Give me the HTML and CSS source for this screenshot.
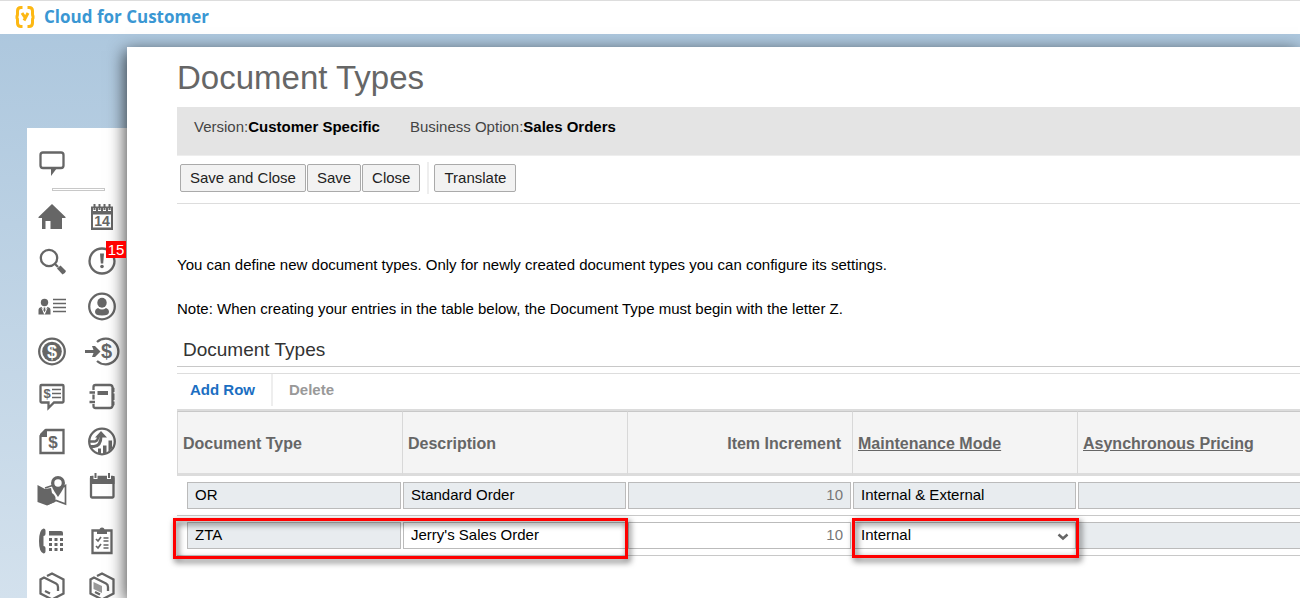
FILE: index.html
```html
<!DOCTYPE html>
<html lang="en">
<head>
    <meta charset="UTF-8">
    <meta name="viewport" content="width=device-width, initial-scale=1.0">
    <title>Document Types - Cloud for Customer</title>
    <link rel="stylesheet" href="styles.css">
</head>
<body>
    <header class="topbar">
        <svg class="logo" viewBox="0 0 22 24" aria-hidden="true">
            <path d="M8.500 2.500H7Q3.500 2.500 3.500 6V9Q3.500 12 1.500 12Q3.500 12 3.500 15V18Q3.500 21.500 7 21.500H8.500M13.500 2.500H15Q18.500 2.500 18.500 6V9Q18.500 12 20.500 12Q18.500 12 18.500 15V18Q18.500 21.500 15 21.500H13.500"/>
            <path d="M8 8L11 12.500M14 8L10 15.500"/>
        </svg>
        <span class="brand">Cloud for Customer</span>
    </header>

    <div class="workspace">
        <aside class="sidebar">
            <a href="#" class="icon" aria-label="Feed">
                <svg viewBox="-18 -18 36 36"><path class="line" d="M-9-10.500H9Q11.500-10.500 11.500-8V2.500Q11.500 5 9 5H-9Q-11.500 5-11.500 2.500V-8Q-11.500-10.500-9-10.500Z"/><path d="M-1 5V13L5 5Z"/></svg>
            </a>
            <hr>
            <nav class="icon-grid">
                <a href="#" class="icon" aria-label="Home">
                    <svg viewBox="-18 -18 36 36"><path d="M0-13L13.500 0V1H10V12H-1.500V4H-6.500V12H-10V1H-13.500V0Z"/></svg>
                </a>
                <a href="#" class="icon" aria-label="Calendar">
                    <svg viewBox="-18 -18 36 36"><path d="M-11-10.500H11V13H-11Z"/><path class="hole" d="M-9-2.500H9V10.500H-9Z"/><path class="hole" d="M-9-9H-6V-6H-9ZM-4-9H-1V-6H-4ZM1-9H4V-6H1ZM6-9H9V-6H6Z"/><path d="M-8.500-13H-6.500V-7H-8.500ZM-3.500-13H-1.500V-7H-3.500ZM1.500-13H3.500V-7H1.500ZM6.500-13H8.500V-7H6.500Z"/><text x="0" y="9" font-size="14">14</text></svg>
                </a>
                <a href="#" class="icon" aria-label="Search">
                    <svg viewBox="-18 -18 36 36"><circle class="line" cx="-3" cy="-4" r="8.200"/><path class="line" d="M3 2L6 5"/><path d="M5 6.500L8.500 3.500L14 9Q13 12 10.500 12.500Z"/></svg>
                </a>
                <a href="#" class="icon" aria-label="Alerts, 15 new">
                    <svg viewBox="-18 -18 36 36"><circle class="line" cx="0" cy="-1" r="12.500"/><path d="M-2-8.500H2L1.200 1.500H-1.200Z"/><circle cx="0" cy="4.500" r="1.800"/></svg>
                    <span class="badge">15</span>
                </a>
                <a href="#" class="icon" aria-label="People">
                    <svg viewBox="-18 -18 36 36"><circle cx="-7.500" cy="-4.500" r="3.700"/><path d="M-13.500 7.500V3Q-13.500.5-10.500 0L-7.500 4L-4.500 0Q-1.500.5-1.500 3V7.500Z"/><path class="hole" d="M-10.500 1H-9.800L-7.500 5L-5.200 1H-4.500L-7.200 7.500H-7.800Z"/><path d="M-8.300.5H-6.700L-6.900 4L-7.500 5L-8.100 4Z"/><path class="thin" d="M1-7.500H14M1-3.500H14M1 .5H14M1 4.500H14"/></svg>
                </a>
                <a href="#" class="icon" aria-label="Account">
                    <svg viewBox="-18 -18 36 36"><circle class="line" cx="0" cy="-.5" r="12.800"/><ellipse cx="0" cy="-4.200" rx="4.700" ry="5"/><path d="M-4 1Q0 4 4 1Q7 2 7 5Q7 8.500 0 8.500Q-7 8.500-7 5Q-7 2-4 1Z"/></svg>
                </a>
                <a href="#" class="icon" aria-label="Sales">
                    <svg viewBox="-18 -18 36 36"><circle class="line" cx="0" cy="-.5" r="12.800"/><circle cx="0" cy="-.5" r="9.800"/><text class="hole" x="0" y="6" font-size="18">$</text></svg>
                </a>
                <a href="#" class="icon" aria-label="Leads">
                    <svg viewBox="-18 -18 36 36"><path class="line" d="M-5-10A12.800 12.800 0 1 1-5 9"/><path d="M-17-2H-8.500L-10-6H-7L-1.500-.5L-7 5H-10L-8.500 1H-17Z"/><text x="4.500" y="6" font-size="20">$</text></svg>
                </a>
                <a href="#" class="icon" aria-label="Quotes">
                    <svg viewBox="-18 -18 36 36"><path class="line" d="M-10.500-12H10.500Q11.500-12 11.500-11V4.500Q11.500 5.500 10.500 5.500H2L-3.500 11V5.500H-10.500Q-11.500 5.500-11.500 4.500V-11Q-11.500-12-10.500-12Z"/><path class="thin" d="M0-7.500H9M0-3.500H9M0 .5H9"/><text x="-5" y="1" font-size="13">$</text></svg>
                </a>
                <a href="#" class="icon" aria-label="Contracts">
                    <svg viewBox="-18 -18 36 36"><path class="line" d="M-8.500-7V-10Q-8.500-12-6.500-12H8Q10-12 10.500-10V9Q10 11 8 11H-6.500Q-8.500 11-8.500 9V7M-8.500-2.500V2.500M-12.500-4.500H-7M-12.500 5H-7"/><path d="M-4.500-6H6V-2H-4.500ZM10-10.500L12.500-9V-5H10ZM10-3.500H12.500V3H10ZM10 4.500H12.500V8L10 10Z"/></svg>
                </a>
                <a href="#" class="icon" aria-label="Orders">
                    <svg viewBox="-18 -18 36 36"><path class="line" d="M-6-12H11.500V11H-11.500V-6Z"/><path d="M-12-5V-8L-7-13H-5V-5Z"/><text x="1" y="6" font-size="17">$</text></svg>
                </a>
                <a href="#" class="icon" aria-label="Analytics">
                    <svg viewBox="-18 -18 36 36"><circle class="line" cx="0" cy="-.5" r="12.800"/><path class="line bold" d="M-11 4.500H-8Q-1 4-1-6"/><path class="line" d="M-12-.5H-7Q-4-1-4-5"/><path d="M-7-4.500L-1-11L5-4.500ZM-4 6.500H-1V12H-4ZM1 3.500H4.500V12H1ZM6.500-1.500H10V6L6.500 10Z"/></svg>
                </a>
                <a href="#" class="icon" aria-label="Territories">
                    <svg viewBox="-18 -18 36 36"><path d="M-14.500-6L-7-2L-1-3L0 2Q5 5 3 11L-5 14.500L-14.500 11Z"/><path class="thin" d="M-7-3L2-6M11-4L13.500-5.500V13L4 9.500L-5 13.500"/><path d="M6-15A7 7 0 0 1 13-8Q13-4 6 6Q-1-4-1-8A7 7 0 0 1 6-15Z"/><circle class="hole" cx="6" cy="-8" r="3.700"/></svg>
                </a>
                <a href="#" class="icon" aria-label="Activities">
                    <svg viewBox="-18 -18 36 36"><path class="line" d="M-10-14H10.500Q11.500-14 11.500-13V5.500Q11.500 6.500 10.500 6.500H-10Q-11 6.500-11 5.500V-13Q-11-14-10-14Z"/><path d="M-12-15H12.500V-7H-12Z"/><path class="hole" d="M-8.500-17H-4.500V-12H-8.500ZM5-17H9V-12H5Z"/><path d="M-7.500-18H-5.500V-13H-7.500ZM6-18H8V-13H6Z"/></svg>
                </a>
                <a href="#" class="icon" aria-label="Phone">
                    <svg viewBox="-18 -18 36 36"><path d="M-8.500-12.500Q-6.500-12.500-6.500-10.500V-7Q-6.500-5-8.500-5V5Q-6.500 5-6.500 7V10.500Q-6.500 12.500-8.500 12.500Q-13 11-13 0Q-13-11-8.500-12.500Z"/><path d="M-3-10H9Q11-10 11-8V-5.500H-3Z"/><path d="M-3-3H0V0H-3ZM2.500-3H5.500V0H2.500ZM8-3H11V0H8ZM-3 2H0V5H-3ZM2.500 2H5.500V5H2.500ZM8 2H11V5H8ZM-3 7H0V10H-3ZM2.500 7H5.500V10H2.500ZM8 7H11V10H8Z"/></svg>
                </a>
                <a href="#" class="icon" aria-label="Surveys">
                    <svg viewBox="-18 -18 36 36"><path class="line" d="M-9.500-10.500H9.500V12H-9.500Z"/><path d="M-5-7V-10L-2.500-11Q-2.500-13.500 0-13.500Q2.500-13.500 2.500-11L5-10V-7Z"/><path class="thin" d="M-6-2L-4 0L-1-4M-6 5L-4 7L-1 3M1.500-3H6.500M1.500 0H6.500M1.500 4H6.500M1.500 7H6.500"/></svg>
                </a>
                <a href="#" class="icon" aria-label="Products">
                    <svg viewBox="-18 -18 36 36"><path class="line" d="M-5-10L0-12.500L11.500-6.500V7.500L0 13.500L-11.500 7.500V-6.500L-8-8.500L4-2.500Q6-1.500 6 1V5"/><path class="line" d="M-7 5L-2 7.500"/></svg>
                </a>
                <a href="#" class="icon" aria-label="Registered products">
                    <svg viewBox="-18 -18 36 36"><path class="line" d="M-5-10L0-12.500L11.500-6.500V7.500L0 13.500L-11.500 7.500V-6.500L-8-8.500L4-2.500Q6-1.500 6 1V5"/><path class="faint" d="M-8.500-4L0 0V7L-8.500 3Z"/><path class="line" d="M-7 6L-2 8.500"/></svg>
                </a>
            </nav>
        </aside>

        <main class="panel">
            <h1>Document Types</h1>
            <div class="context">
                <span>Version:<b>Customer Specific</b></span>
                <span>Business Option:<b>Sales Orders</b></span>
            </div>
            <div class="actions">
                <button type="button">Save and Close</button>
                <button type="button">Save</button>
                <button type="button">Close</button>
                <span class="separator"></span>
                <button type="button">Translate</button>
            </div>

            <div class="intro">
                <p>You can define new document types. Only for newly created document types you can configure its settings.</p>
                <p>Note: When creating your entries in the table below, the Document Type must begin with the letter Z.</p>
            </div>

            <h2>Document Types</h2>
            <div class="table-tools">
                <button type="button" class="add">Add Row</button>
                <span class="separator"></span>
                <button type="button" class="delete" disabled>Delete</button>
            </div>
            <table>
                <thead>
                    <tr>
                        <th>Document Type</th>
                        <th>Description</th>
                        <th class="number">Item Increment</th>
                        <th><a href="#">Maintenance Mode</a></th>
                        <th><a href="#">Asynchronous Pricing</a></th>
                    </tr>
                </thead>
                <tbody>
                    <tr>
                        <td><input type="text" value="OR" aria-label="Document Type" readonly></td>
                        <td><input type="text" value="Standard Order" aria-label="Description" readonly></td>
                        <td class="number"><input type="text" value="10" aria-label="Item Increment" readonly></td>
                        <td><input type="text" value="Internal &amp; External" aria-label="Maintenance Mode" readonly></td>
                        <td><input type="text" value="" aria-label="Asynchronous Pricing" readonly></td>
                    </tr>
                    <tr>
                        <td class="marked wide"><input type="text" value="ZTA" aria-label="Document Type" readonly></td>
                        <td><input type="text" value="Jerry's Sales Order" aria-label="Description"></td>
                        <td class="number"><input type="text" value="10" aria-label="Item Increment"></td>
                        <td class="marked">
                            <select aria-label="Maintenance Mode">
                                <option>Internal</option>
                                <option>Internal &amp; External</option>
                            </select>
                            <svg class="chevron" viewBox="0 0 12 8" aria-hidden="true"><path d="M1.500 1.500L6 5.500L10.500 1.500"/></svg>
                        </td>
                        <td><input type="text" value="" aria-label="Asynchronous Pricing" readonly></td>
                    </tr>
                </tbody>
            </table>
        </main>
    </div>
</body>
</html>
```
FILE: styles.css
```css
*, *::after {
    box-sizing: border-box;
}
body {
    display: flex;
    flex-direction: column;
    height: 100vh;
    margin: 0;
    overflow: hidden;
    font-family: "Liberation Sans", Arial, sans-serif;
    font-size: 15px;
    line-height: 22px;
    color: #000;
    background: linear-gradient(#abc6dd, #d3e1ed);
}
.topbar {
    display: flex;
    align-items: center;
    gap: 8px;
    height: 34px;
    flex-shrink: 0;
    padding: 0 14px 2px;
    border-top: 1px solid #ddd;
    background: #fff;
}
.logo {
    width: 22px;
    height: 24px;
    fill: none;
    stroke: #fdb813;
    stroke-width: 3;
}
.brand {
    font-family: "Open Sans", sans-serif;
    font-size: 17px;
    font-weight: 700;
    color: #3a97d3;
}
.workspace {
    display: flex;
    flex: 1;
    min-height: 0;
}

/* icon bar */
.sidebar {
    width: 100px;
    flex-shrink: 0;
    margin: 94px 0 0 27px;
    padding-top: 17px;
    background: #fff;
}
.sidebar hr {
    width: 53px;
    height: 3px;
    margin: 7px 0 3px 25px;
    border: 1px solid #c8c8c8;
}
.icon {
    position: relative;
    display: flex;
    align-items: center;
    justify-content: center;
    width: 50px;
}
.icon svg {
    width: 36px;
    height: 36px;
    fill: #666;
}
.icon text {
    font-weight: bold;
    text-anchor: middle;
}
.icon .line {
    fill: none;
    stroke: #666;
    stroke-width: 2.3;
}
.icon .bold {
    stroke-width: 3;
}
.icon .thin {
    fill: none;
    stroke: #666;
    stroke-width: 1.7;
}
.icon .faint {
    fill: #999;
}
.icon .hole {
    fill: #fff;
}
.icon-grid {
    display: grid;
    grid-template-columns: 50px 50px;
    grid-template-rows: repeat(6, 45px) 54px repeat(2, 45px);
}
.badge {
    position: absolute;
    top: 2px;
    right: 1px;
    z-index: 2;
    width: 20px;
    font-size: 15px;
    line-height: 17px;
    text-align: center;
    color: #fff;
    background: #f00;
}

/* document panel */
.panel {
    position: relative;
    z-index: 1;
    flex: 1;
    min-width: 0;
    margin-top: 13px;
    padding: 11px 0 0 50px;
    overflow: hidden;
    background: #fff;
    box-shadow: -2px 4px 16px rgba(0, 0, 0, 0.7);
}
h1 {
    margin: 0 0 9px;
    font-size: 33px;
    font-weight: normal;
    line-height: 40px;
    color: #666;
}
.context {
    display: flex;
    gap: 30px;
    height: 49px;
    padding: 9px 17px;
    border-bottom: 1px solid #eee;
    color: #444;
    background: #e4e4e4;
}
.context b {
    color: #000;
}
.actions {
    display: flex;
    align-items: center;
    gap: 1px;
    height: 48px;
    padding: 0 3px 3px;
    border-bottom: 1px solid #ddd;
}
button {
    font: inherit;
    cursor: pointer;
}
.actions button {
    height: 28px;
    padding: 0 9px;
    border: 1px solid #aaa;
    border-radius: 2px;
    color: #222;
    background: #f2f2f2;
}
.separator {
    width: 2px;
    height: 32px;
    background: #eee;
}
.actions .separator {
    margin: 0 4px 0 6px;
}
.intro {
    padding: 50px 0 18px;
}
.intro p {
    margin: 0 0 22px;
}
.intro p:last-child {
    margin: 0;
}
h2 {
    margin: 0 0 6px;
    padding: 0 6px 4px;
    border-bottom: 1px solid #c8c8c8;
    font-size: 19px;
    font-weight: normal;
    line-height: 24px;
    color: #333;
}
.table-tools {
    display: flex;
    height: 36px;
    border-top: 1px solid #ddd;
}
.table-tools button {
    height: 32px;
    padding: 0 16px;
    border: 0;
    font-weight: bold;
    background: none;
}
.table-tools .add {
    padding-left: 13px;
    color: #1b6ec2;
}
.table-tools .delete {
    color: #999;
}

table {
    width: 1125px;
    table-layout: fixed;
    border-collapse: separate;
    border-spacing: 0;
    border-top: 2px solid #dcdcdc;
}
th {
    height: 65px;
    padding: 2px 5px 0;
    border-top: 1px solid #c8c8c8;
    border-bottom: 3px solid #dcdcdc;
    border-left: 1px solid #d8d8d8;
    font-size: 16px;
    text-align: left;
    color: #666;
    background: #f4f4f4;
}
th.number {
    padding-right: 11px;
    text-align: right;
}
th a {
    color: inherit;
}
td {
    padding: 6px 1px;
    border-bottom: 1px solid #c8c8c8;
}
td:first-child {
    padding-left: 10px;
}
td input, td select {
    display: block;
    width: 100%;
    height: 27px;
    margin: 0;
    padding: 0 7px 2px;
    border: 1px solid #bbb;
    border-radius: 0;
    font: inherit;
    color: #000;
    background: #fff;
    appearance: none;
}
td input:read-only {
    background: #e8ecef;
}
td.number input {
    text-align: right;
    color: #777;
}
.marked {
    position: relative;
}
/* red frame around the new entry */
.marked::after {
    content: "";
    position: absolute;
    top: 2px;
    left: 0;
    z-index: 1;
    width: calc(100% + 2px);
    height: 40px;
    border: 3px solid #f00;
    filter: drop-shadow(2px 3px 3px rgba(0, 0, 0, 0.7));
    pointer-events: none;
}
.marked.wide::after {
    left: -4px;
    width: calc(200% + 5px);
    height: 41px;
}
.chevron {
    position: absolute;
    top: 17px;
    right: 8px;
    width: 12px;
    height: 8px;
    fill: none;
    stroke: #666;
    stroke-width: 2.5;
    pointer-events: none;
}
```
